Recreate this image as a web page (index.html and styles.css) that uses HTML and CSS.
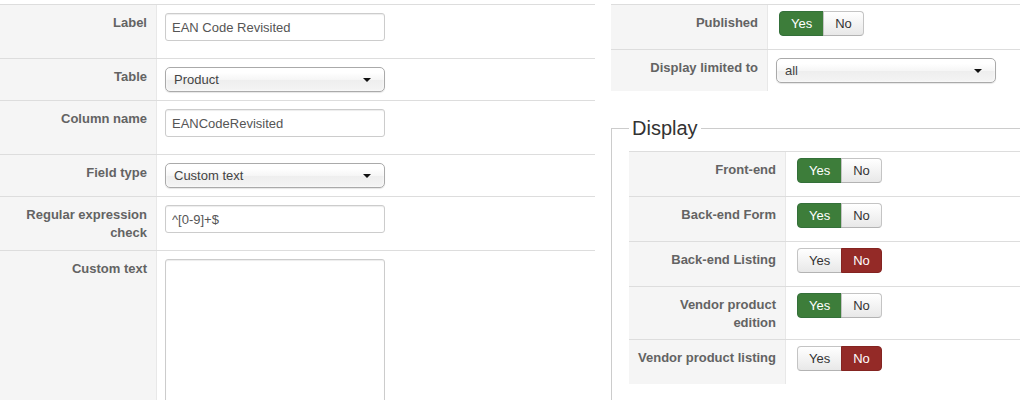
FILE: index.html
```html
<!DOCTYPE html>
<html lang="en">
<head>
    <meta charset="UTF-8">
    <title>Custom field</title>
    <link rel="stylesheet" href="styles.css">
</head>
<body>
    <div class="page">
        <!-- Основные параметры поля -->
        <div class="col-left">
            <div class="form-table">
                <div class="row">
                    <div class="label">Label</div>
                    <div class="field field-input"><input type="text" class="text-input" value="EAN Code Revisited"></div>
                </div>
                <div class="row">
                    <div class="label">Table</div>
                    <div class="field field-select"><div class="select-box">Product<span class="caret"></span></div></div>
                </div>
                <div class="row">
                    <div class="label">Column name</div>
                    <div class="field field-input"><input type="text" class="text-input" value="EANCodeRevisited"></div>
                </div>
                <div class="row">
                    <div class="label">Field type</div>
                    <div class="field field-select"><div class="select-box">Custom text<span class="caret"></span></div></div>
                </div>
                <div class="row">
                    <div class="label">Regular expression check</div>
                    <div class="field field-input"><input type="text" class="text-input" value="^[0-9]+$"></div>
                </div>
                <div class="row">
                    <div class="label">Custom text</div>
                    <div class="field field-input"><textarea class="text-area"></textarea></div>
                </div>
            </div>
        </div>

        <!-- Публикация и отображение -->
        <div class="col-right">
            <div class="form-table">
                <div class="row">
                    <div class="label">Published</div>
                    <div class="field field-toggle">
                        <div class="btn-group"><span class="btn yes-on">Yes</span><span class="btn">No</span></div>
                    </div>
                </div>
                <div class="row">
                    <div class="label">Display limited to</div>
                    <div class="field field-select"><div class="select-box">all<span class="caret"></span></div></div>
                </div>
            </div>

            <fieldset class="display-set">
                <legend>Display</legend>
                <div class="form-table">
                    <div class="row">
                        <div class="label">Front-end</div>
                        <div class="field field-toggle">
                            <div class="btn-group"><span class="btn yes-on">Yes</span><span class="btn">No</span></div>
                        </div>
                    </div>
                    <div class="row">
                        <div class="label">Back-end Form</div>
                        <div class="field field-toggle">
                            <div class="btn-group"><span class="btn yes-on">Yes</span><span class="btn">No</span></div>
                        </div>
                    </div>
                    <div class="row">
                        <div class="label">Back-end Listing</div>
                        <div class="field field-toggle">
                            <div class="btn-group"><span class="btn">Yes</span><span class="btn no-on">No</span></div>
                        </div>
                    </div>
                    <div class="row">
                        <div class="label">Vendor product edition</div>
                        <div class="field field-toggle">
                            <div class="btn-group"><span class="btn yes-on">Yes</span><span class="btn">No</span></div>
                        </div>
                    </div>
                    <div class="row">
                        <div class="label">Vendor product listing</div>
                        <div class="field field-toggle">
                            <div class="btn-group"><span class="btn">Yes</span><span class="btn no-on">No</span></div>
                        </div>
                    </div>
                </div>
            </fieldset>
        </div>
    </div>
</body>
</html>
```

FILE: styles.css
```css
* {
    margin: 0;
    padding: 0;
    box-sizing: border-box;
}

body {
    font-family: 'Liberation Sans', Arial, sans-serif;
    font-size: 13px;
    line-height: 18px;
    color: #333;
    background: #fff;
    overflow: hidden;
}

.page {
    display: grid;
    grid-template-columns: 595px 1fr;
    column-gap: 16px;
    padding-top: 4px;
}

/* Таблица формы */
.row {
    display: flex;
    border-top: 1px solid #ddd;
}

.label {
    width: 157px;
    flex-shrink: 0;
    padding: 9px 9px 7px 7px;
    text-align: right;
    font-weight: bold;
    color: #636363;
    background: #f5f5f5;
    border-right: 1px solid #e8e8e8;
}

.field {
    flex: 1;
    padding: 8px;
}

.field-toggle {
    padding: 6px 8px 13px 11px;
}

.text-input,
.text-area {
    display: block;
    width: 220px;
    height: 28px;
    margin-bottom: 9px;
    padding: 4px 6px;
    font-family: inherit;
    font-size: 13px;
    color: #555;
    border: 1px solid #ccc;
    border-radius: 3px;
    box-shadow: inset 0 1px 1px rgba(0,0,0,0.075);
    outline: none;
}

.text-area {
    height: 200px;
    resize: none;
}

/* Выпадающий список */
.select-box {
    position: relative;
    width: 220px;
    height: 25px;
    padding-left: 8px;
    line-height: 23px;
    color: #444;
    border: 1px solid #aaa;
    border-radius: 5px;
    background: linear-gradient(#fff 20%, #f6f6f6 50%, #eee 52%, #f4f4f4 100%);
    box-shadow: inset 0 0 3px #fff, 0 1px 1px rgba(0,0,0,0.1);
}

.caret {
    position: absolute;
    right: 13px;
    top: 10px;
    border-left: 4px solid transparent;
    border-right: 4px solid transparent;
    border-top: 4px solid #111;
}

/* Переключатели Да/Нет */
.btn-group {
    display: inline-flex;
}

.btn {
    padding: 3px 11px;
    line-height: 17px;
    color: #333;
    border: 1px solid #c4c4c4;
    border-bottom-color: #b3b3b3;
    background: linear-gradient(#fff, #e8e8e8);
}

.btn:first-child {
    border-radius: 4px 0 0 4px;
}

.btn + .btn {
    margin-left: -1px;
    border-radius: 0 4px 4px 0;
}

.btn.yes-on {
    color: #fff;
    background: #3d7d3a;
    border-color: #34703a;
}

.btn.no-on {
    color: #fff;
    background: #942a27;
    border-color: #842421;
}

/* Блок "Display" */
.display-set {
    margin: 25px -20px 0 0;
    padding: 11px 0 40px 17px;
    border: 1px solid #ccc;
}

.display-set legend {
    padding: 0 3px;
    font-size: 20px;
    line-height: 24px;
    color: #333;
}
```
